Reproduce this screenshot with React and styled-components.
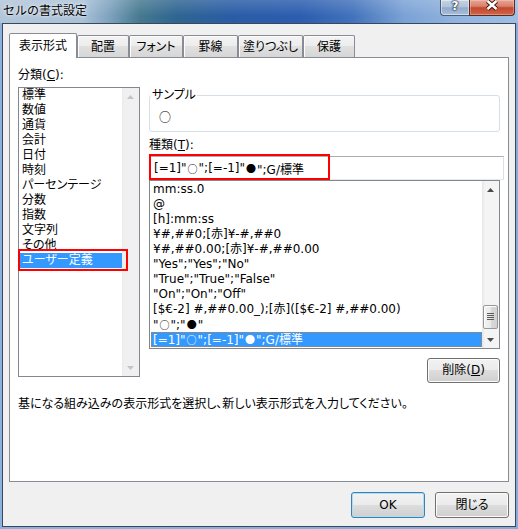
import React from 'react';
import styled, { createGlobalStyle, css } from 'styled-components';

const GlobalStyle = createGlobalStyle`
  html, body {
    margin: 0;
    padding: 0;
    background: #fff;
  }
  body {
    font-family: "DejaVu Sans", "Noto Sans CJK JP", sans-serif;
    font-size: 12px;
    color: #000;
  }
`;

const categories = [
  '標準',
  '数値',
  '通貨',
  '会計',
  '日付',
  '時刻',
  'パーセンテージ',
  '分数',
  '指数',
  '文字列',
  'その他',
  'ユーザー定義'
];

const formats = [
  'mm:ss.0',
  '@',
  '[h]:mm:ss',
  '¥#,##0;[赤]¥-#,##0',
  '¥#,##0.00;[赤]¥-#,##0.00',
  '"Yes";"Yes";"No"',
  '"True";"True";"False"',
  '"On";"On";"Off"',
  '[$€-2] #,##0.00_);[赤]([$€-2] #,##0.00)',
  '"○";"●"',
  '[=1]"○";[=-1]"●";G/標準'
];

const tabs = [
  { label: '表示形式', width: 68 },
  { label: '配置', width: 52 },
  { label: 'フォント', width: 54 },
  { label: '罫線', width: 55 },
  { label: '塗りつぶし', width: 65 },
  { label: '保護', width: 52 }
];

// ○ and ● come from the Japanese font, like in Excel
const withMarks = (text, size) =>
  text.split(/([○●])/).map((part, i) =>
    part === '○' || part === '●' ? (
      <Mark key={i} $size={size}>
        {part}
      </Mark>
    ) : (
      part
    )
  );

// red annotation frame drawn over a control
const redMark = (top, right, bottom, left) => css`
  &::after {
    content: '';
    position: absolute;
    top: ${top}px;
    right: ${right}px;
    bottom: ${bottom}px;
    left: ${left}px;
    border: 2px solid #ff0000;
    z-index: 3;
    pointer-events: none;
  }
`;

const Arrow = ({ down, disabled }) => (
  <svg width="7" height="4" viewBox="0 0 7 4">
    <path
      d={down ? 'M0 0H7L3.5 4Z' : 'M0 4H7L3.5 0Z'}
      fill={disabled ? '#c4c4c4' : '#4a4a4a'}
    />
  </svg>
);

const Grip = () => (
  <svg width="7" height="8" viewBox="0 0 7 8">
    {[0, 2, 4, 6].map(y => (
      <rect key={y} x="0" y={y} width="7" height="1" fill="#5c5c5c" />
    ))}
  </svg>
);

const CloseGlyph = () => (
  <svg width="14" height="11" viewBox="0 0 14 11">
    <path d="M2.5 1L11.5 9M11.5 1L2.5 9" stroke="#3b1710" strokeWidth="4.4" />
    <path d="M2.5 1L11.5 9M11.5 1L2.5 9" stroke="#fff" strokeWidth="2.4" />
  </svg>
);

export default function App() {
  return (
    <>
      <GlobalStyle />
      <Window>
        <TitleBar>
          <Title>セルの書式設定</Title>
          <CaptionGroup>
            <HelpButton>?</HelpButton>
            <CloseButton>
              <CloseGlyph />
            </CloseButton>
          </CaptionGroup>
        </TitleBar>
        <Frame>
          <Body>
            <TabStrip>
              {tabs.map((t, i) => (
                <Tab key={t.label} $w={t.width} $active={i === 0}>
                  {t.label}
                </Tab>
              ))}
            </TabStrip>
            <Panel>
              <Columns>
                <LeftCol>
                  <FieldLabel>
                    分類(<u>C</u>):
                  </FieldLabel>
                  <CategoryBox>
                    <Items>
                      {categories.map((c, i) => (
                        <ListItem
                          key={c}
                          $selected={i === categories.length - 1}
                          $marked={i === categories.length - 1}
                        >
                          {c}
                        </ListItem>
                      ))}
                    </Items>
                    <ScrollBar>
                      <ScrollArrow>
                        <Arrow disabled />
                      </ScrollArrow>
                      <ScrollTrack />
                      <ScrollArrow>
                        <Arrow down disabled />
                      </ScrollArrow>
                    </ScrollBar>
                  </CategoryBox>
                </LeftCol>
                <RightCol>
                  <SampleBox>
                    <SampleLegend>サンプル</SampleLegend>
                    <SampleValue>{withMarks('○', 12)}</SampleValue>
                  </SampleBox>
                  <TypeLabel>
                    種類(<u>T</u>):
                  </TypeLabel>
                  <FormatInput>{withMarks('[=1]"○";[=-1]"●";G/標準')}</FormatInput>
                  <FormatBox>
                    <Items $top={1}>
                      {formats.map((f, i) => (
                        <ListItem key={f} $selected={i === formats.length - 1} $focus>
                          {withMarks(f)}
                        </ListItem>
                      ))}
                    </Items>
                    <ScrollBar $enabled>
                      <ScrollArrow>
                        <Arrow />
                      </ScrollArrow>
                      <ScrollTrack>
                        <Thumb>
                          <Grip />
                        </Thumb>
                      </ScrollTrack>
                      <ScrollArrow>
                        <Arrow down />
                      </ScrollArrow>
                    </ScrollBar>
                  </FormatBox>
                  <DeleteButton>
                    削除(<u>D</u>)
                  </DeleteButton>
                </RightCol>
              </Columns>
              <Hint>
                基になる組み込みの表示形式を選択し、新しい表示形式を入力してください。
              </Hint>
            </Panel>
            <ButtonRow>
              <Button $default>OK</Button>
              <Button>閉じる</Button>
            </ButtonRow>
          </Body>
        </Frame>
      </Window>
    </>
  );
}

const Window = styled.div`
  width: 518px;
  height: 529px;
  display: flex;
  flex-direction: column;
  overflow: hidden;
  background: linear-gradient(to right, #8db1de, #86acdc);
`;

const TitleBar = styled.div`
  height: 23px;
  flex: none;
  display: flex;
  align-items: flex-start;
  background:
    linear-gradient(rgba(255, 255, 255, 0.16), rgba(255, 255, 255, 0) 70%),
    linear-gradient(
      to right,
      #b2c6da 0%,
      #a9c0d7 16%,
      #7fa3bf 21%,
      #46798f 27%,
      #2f6591 34%,
      #2a5ca6 45%,
      #2c5daf 58%,
      #4272bb 68%,
      #7aa2d5 78%,
      #91b3de 88%,
      #9ebfe3 100%
    );
`;

const Title = styled.div`
  padding: 2px 0 0 3px;
  font-family: "Noto Sans CJK JP", sans-serif;
  font-size: 12px;
  line-height: 15px;
  color: #000;
  text-shadow: 0 0 5px rgba(255, 255, 255, 0.9), 0 0 2px rgba(255, 255, 255, 0.8);
`;

const CaptionGroup = styled.div`
  margin-left: auto;
  margin-right: 3px;
  display: flex;
  height: 16px;
`;

const HelpButton = styled.div`
  width: 29px;
  box-sizing: border-box;
  border: 1px solid #4a5d78;
  border-top: none;
  border-right: none;
  border-radius: 0 0 0 4px;
  background: linear-gradient(#c4d3e3, #b0c3d9 45%, #91aac8 52%, #a6c0dc);
  box-shadow: inset 0 0 0 1px rgba(255, 255, 255, 0.45);
  display: flex;
  justify-content: center;
  align-items: flex-start;
  font: bold 12px/12px "DejaVu Sans", sans-serif;
  color: #fff;
  text-shadow: 0 0 1px #1b2a3d, 0 0 2px #1b2a3d, 0 0 2px #1b2a3d;
`;

const CloseButton = styled.div`
  width: 46px;
  box-sizing: border-box;
  border: 1px solid #5a2a22;
  border-top: none;
  border-radius: 0 0 4px 0;
  background: linear-gradient(#e6a695, #d8806b 42%, #c4472e 52%, #d06749);
  box-shadow: inset 0 0 0 1px rgba(255, 220, 210, 0.35);
  display: flex;
  justify-content: center;
  align-items: flex-start;
`;

const Frame = styled.div`
  flex: 1;
  min-height: 0;
  display: flex;
  padding: 0 3px 2px 2px;
`;

const Body = styled.div`
  flex: 1;
  display: flex;
  flex-direction: column;
  border: 1px solid #3a485b;
  background: #f0f0f0;
  padding: 9px 6px 8px 6px;
  font-feature-settings: "palt";
`;

const Mark = styled.span`
  display: inline-block;
  height: 15px;
  line-height: 15px;
  padding: 0 1px;
  font-family: "Noto Sans CJK JP", sans-serif;
  font-size: ${p => p.$size || 10}px;
  font-feature-settings: normal;
`;

const TabStrip = styled.div`
  height: 24px;
  display: flex;
  align-items: flex-end;
  position: relative;
  z-index: 1;
`;

const Tab = styled.div`
  box-sizing: border-box;
  width: ${p => p.$w}px;
  height: ${p => (p.$active ? 25 : 22)}px;
  margin-bottom: ${p => (p.$active ? -1 : 0)}px;
  padding-top: ${p => (p.$active ? 0 : 2)}px;
  border: 1px solid #898c95;
  border-bottom: none;
  border-radius: 2px 2px 0 0;
  background: ${p =>
    p.$active ? '#fff' : 'linear-gradient(#f4f4f4, #ececec 50%, #e0e0e0 50%, #d6d6d6)'};
  box-shadow: ${p => (p.$active ? 'none' : 'inset 1px 1px 0 #fcfcfc')};
  display: flex;
  align-items: center;
  justify-content: center;
  line-height: 15px;
  white-space: nowrap;
`;

const Panel = styled.div`
  box-sizing: border-box;
  height: 425px;
  border: 1px solid #898c95;
  background: #fff;
  padding: 10px 8px 0 8px;
  display: flex;
  flex-direction: column;
`;

const Columns = styled.div`
  display: flex;
  align-items: flex-start;
`;

const LeftCol = styled.div`
  width: 122px;
  display: flex;
  flex-direction: column;
`;

const RightCol = styled.div`
  width: 351px;
  margin-left: 9px;
  padding-top: 20px;
  display: flex;
  flex-direction: column;
`;

const FieldLabel = styled.div`
  height: 15px;
  line-height: 15px;
  white-space: nowrap;
`;

const TypeLabel = styled(FieldLabel)`
  margin-top: 6px;
`;

const ListFrame = styled.div`
  box-sizing: border-box;
  display: flex;
  border: 1px solid #828790;
  background: #fff;
`;

const CategoryBox = styled(ListFrame)`
  margin-top: 4px;
  width: 122px;
  height: 290px;
`;

const FormatBox = styled(ListFrame)`
  width: 351px;
  height: 169px;
`;

const Items = styled.div`
  flex: 1;
  min-width: 0;
  padding-top: ${p => p.$top || 0}px;
  display: flex;
  flex-direction: column;
`;

const ListItem = styled.div`
  position: relative;
  height: 15px;
  line-height: 15px;
  margin-left: 1px;
  padding-left: 2px;
  white-space: nowrap;
  ${p =>
    p.$selected &&
    css`
      background: #3399ff;
      color: #fff;
      z-index: 1;
    `}
  ${p =>
    p.$selected &&
    p.$focus &&
    css`
      outline: 1px dotted #c6803c;
      outline-offset: -1px;
    `}
  ${p => p.$marked && redMark(-4, -6, -3, -2)}
`;

const ScrollBar = styled.div`
  width: 17px;
  flex: none;
  display: flex;
  flex-direction: column;
  background: ${p =>
    p.$enabled
      ? 'linear-gradient(to right, #e6e6e6, #f4f4f4 3px, #f4f4f4)'
      : 'linear-gradient(to right, #ececec, #f0f0f0 3px, #f0f0f0)'};
`;

const ScrollArrow = styled.div`
  height: 17px;
  flex: none;
  display: flex;
  align-items: center;
  justify-content: center;
`;

const ScrollTrack = styled.div`
  flex: 1;
  display: flex;
  flex-direction: column;
  justify-content: flex-end;
  padding-bottom: 2px;
`;

const Thumb = styled.div`
  box-sizing: border-box;
  height: 24px;
  margin: 0 1px;
  border: 1px solid #979797;
  border-radius: 2px;
  background: linear-gradient(to right, #f4f4f4, #e9e9e9 50%, #d9d9d9 50%, #d2d2d2);
  box-shadow: inset 1px 1px 0 #fff;
  display: flex;
  align-items: center;
  justify-content: center;
`;

const SampleBox = styled.fieldset`
  box-sizing: border-box;
  height: 44px;
  margin: 0;
  padding: 0 0 0 1px;
  min-width: 0;
  border: 1px solid #d5dfe5;
  border-radius: 3px;
`;

const SampleLegend = styled.legend`
  padding: 0 1px;
  line-height: 15px;
`;

const SampleValue = styled.div`
  margin: 6px 0 0 7px;
  line-height: 15px;
`;

const FormatInput = styled.div`
  position: relative;
  box-sizing: border-box;
  height: 24px;
  margin-top: 3px;
  margin-right: -4px;
  padding-left: 4px;
  border: 1px solid;
  border-color: #abadb3 #dbdfe6 #e3e9ef #e2e3ea;
  background: #fff;
  display: flex;
  align-items: center;
  white-space: nowrap;
  ${redMark(-3, 173, -1, -1)}
`;

const Button = styled.div`
  box-sizing: border-box;
  width: 74px;
  height: 26px;
  border: 1px solid ${p => (p.$default ? '#3c7fb1' : '#707070')};
  border-radius: 3px;
  background: linear-gradient(#f2f2f2, #ebebeb 50%, #dddddd 50%, #cfcfcf);
  box-shadow: inset 0 0 0 1px ${p => (p.$default ? '#a9e0f8' : '#fcfcfc')};
  display: flex;
  align-items: center;
  justify-content: center;
  line-height: 15px;
  white-space: nowrap;
`;

const DeleteButton = styled(Button)`
  width: 73px;
  height: 25px;
  margin-top: 9px;
  align-self: flex-end;
`;

const Hint = styled.div`
  margin-top: 14px;
  line-height: 15px;
  white-space: nowrap;
`;

const ButtonRow = styled.div`
  margin-top: 10px;
  display: flex;
  justify-content: flex-end;
  gap: 10px;
`;
